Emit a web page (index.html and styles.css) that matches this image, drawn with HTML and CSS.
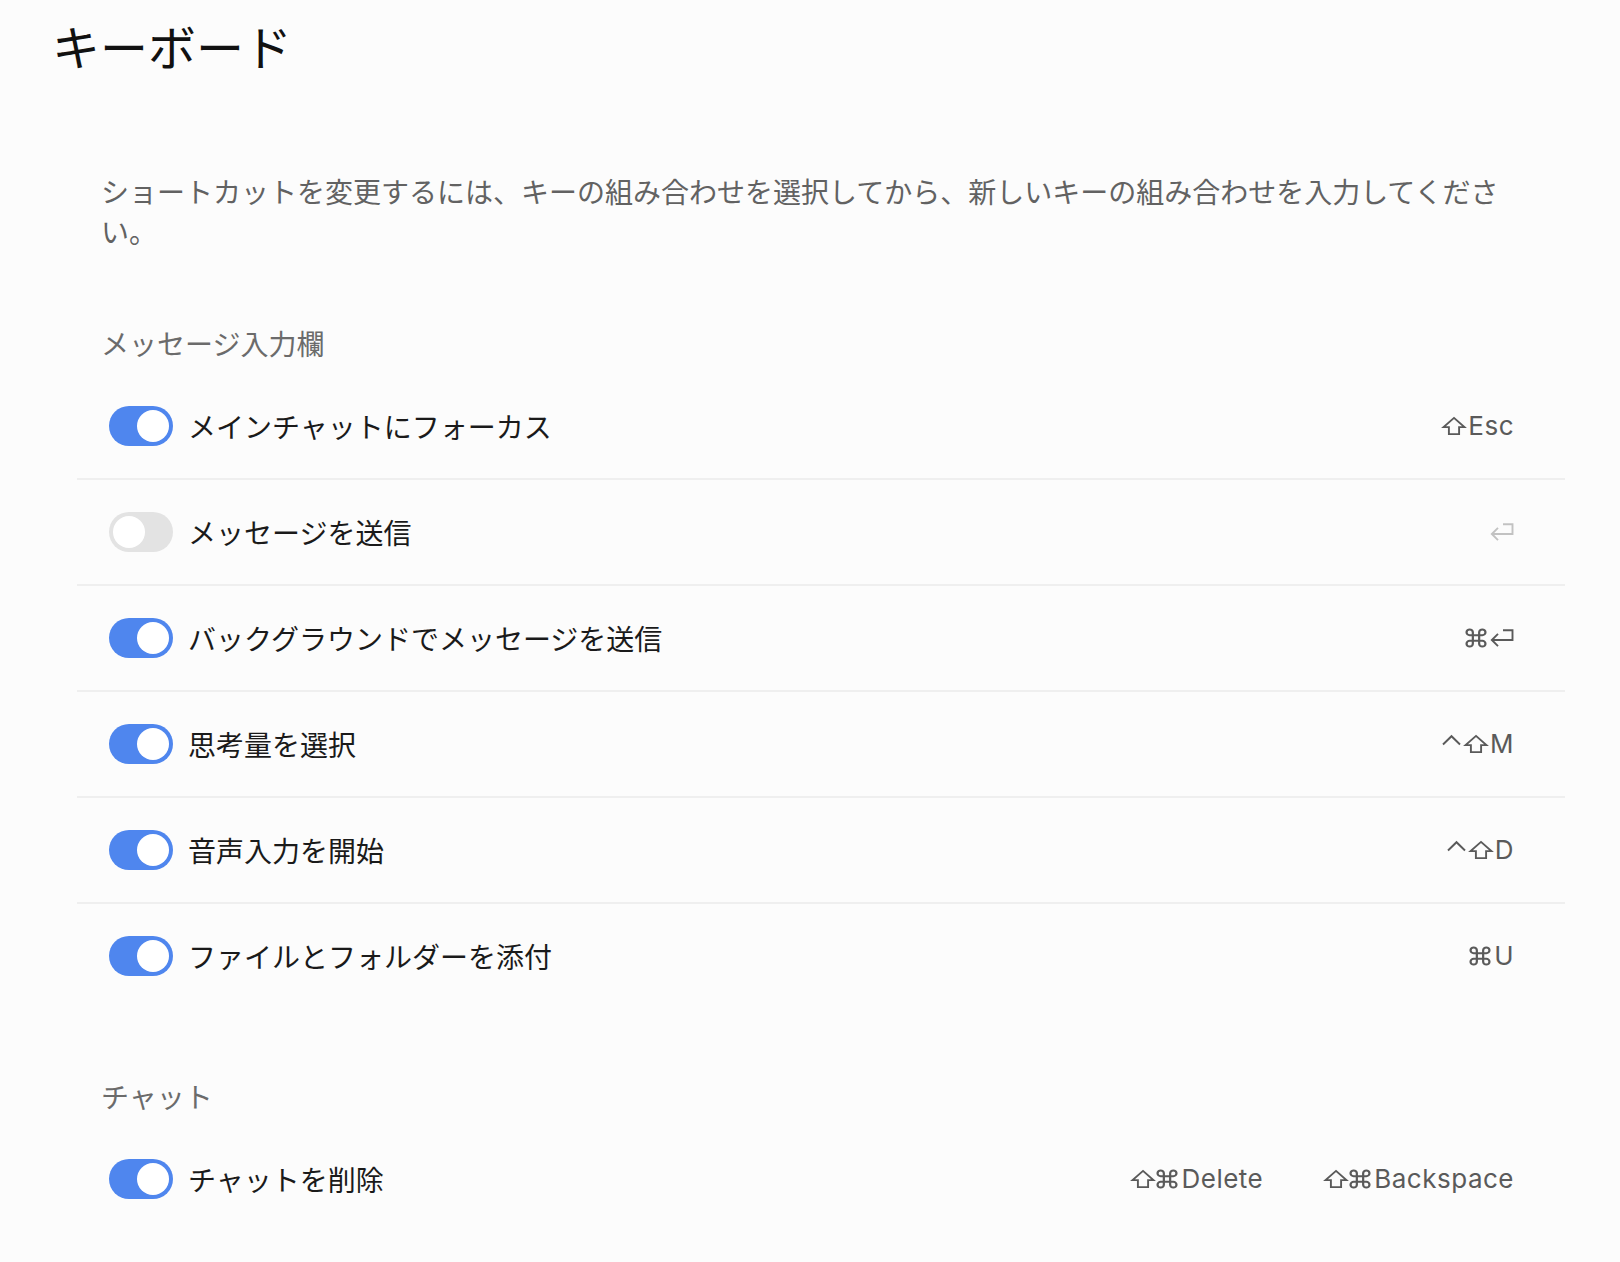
FILE: index.html
```html
<!DOCTYPE html>
<html lang="ja">
<head>
<meta charset="utf-8">
<title>キーボード</title>
<link rel="stylesheet" href="styles.css">
</head>
<body>
<main class="page">
  <h1 class="title">キーボード</h1>
  <div class="settings">
    <p class="desc">ショートカットを変更するには、キーの組み合わせを選択してから、新しいキーの組み合わせを入力してください。</p>

    <section class="section">
      <h2 class="section-title">メッセージ入力欄</h2>
      <div class="list">
        <div class="row">
          <span class="toggle on"><span class="knob"></span></span>
          <span class="label">メインチャットにフォーカス</span>
          <span class="keys">
            <span class="key"><svg class="ic ic-shift" viewBox="0 0 22 18"><path d="M11 0.9L21.4 10.1H16.1V17.1H5.9V10.1H0.6Z"/></svg>Esc</span>
          </span>
        </div>
        <div class="row">
          <span class="toggle off"><span class="knob"></span></span>
          <span class="label">メッセージを送信</span>
          <span class="keys">
            <span class="key muted"><svg class="ic ic-ret" viewBox="0 0 24 18"><path d="M13 1.2H22.5V11H1.8M8 4.8L1.8 11L8 17.2"/></svg></span>
          </span>
        </div>
        <div class="row">
          <span class="toggle on"><span class="knob"></span></span>
          <span class="label">バックグラウンドでメッセージを送信</span>
          <span class="keys">
            <span class="key"><svg class="ic ic-cmd" viewBox="2.5 2.5 19 19" preserveAspectRatio="none"><path d="M15 6v12a3 3 0 1 0 3-3H6a3 3 0 1 0 3 3V6a3 3 0 1 0-3 3h12a3 3 0 1 0-3-3"/></svg><svg class="ic ic-ret" viewBox="0 0 24 18"><path d="M13 1.2H22.5V11H1.8M8 4.8L1.8 11L8 17.2"/></svg></span>
          </span>
        </div>
        <div class="row">
          <span class="toggle on"><span class="knob"></span></span>
          <span class="label">思考量を選択</span>
          <span class="keys">
            <span class="key"><svg class="ic ic-ctrl" viewBox="0 0 19 18"><path d="M1 9.5L9.5 1.2L18 9.5"/></svg><svg class="ic ic-shift" viewBox="0 0 22 18"><path d="M11 0.9L21.4 10.1H16.1V17.1H5.9V10.1H0.6Z"/></svg>M</span>
          </span>
        </div>
        <div class="row">
          <span class="toggle on"><span class="knob"></span></span>
          <span class="label">音声入力を開始</span>
          <span class="keys">
            <span class="key"><svg class="ic ic-ctrl" viewBox="0 0 19 18"><path d="M1 9.5L9.5 1.2L18 9.5"/></svg><svg class="ic ic-shift" viewBox="0 0 22 18"><path d="M11 0.9L21.4 10.1H16.1V17.1H5.9V10.1H0.6Z"/></svg>D</span>
          </span>
        </div>
        <div class="row">
          <span class="toggle on"><span class="knob"></span></span>
          <span class="label">ファイルとフォルダーを添付</span>
          <span class="keys">
            <span class="key"><svg class="ic ic-cmd" viewBox="2.5 2.5 19 19" preserveAspectRatio="none"><path d="M15 6v12a3 3 0 1 0 3-3H6a3 3 0 1 0 3 3V6a3 3 0 1 0-3 3h12a3 3 0 1 0-3-3"/></svg>U</span>
          </span>
        </div>
      </div>
    </section>

    <section class="section">
      <h2 class="section-title">チャット</h2>
      <div class="list">
        <div class="row">
          <span class="toggle on"><span class="knob"></span></span>
          <span class="label">チャットを削除</span>
          <span class="keys">
            <span class="key"><svg class="ic ic-shift" viewBox="0 0 22 18"><path d="M11 0.9L21.4 10.1H16.1V17.1H5.9V10.1H0.6Z"/></svg><svg class="ic ic-cmd" viewBox="2.5 2.5 19 19" preserveAspectRatio="none"><path d="M15 6v12a3 3 0 1 0 3-3H6a3 3 0 1 0 3 3V6a3 3 0 1 0-3 3h12a3 3 0 1 0-3-3"/></svg>Delete</span>
            <span class="key"><svg class="ic ic-shift" viewBox="0 0 22 18"><path d="M11 0.9L21.4 10.1H16.1V17.1H5.9V10.1H0.6Z"/></svg><svg class="ic ic-cmd" viewBox="2.5 2.5 19 19" preserveAspectRatio="none"><path d="M15 6v12a3 3 0 1 0 3-3H6a3 3 0 1 0 3 3V6a3 3 0 1 0-3 3h12a3 3 0 1 0-3-3"/></svg>Backspace</span>
          </span>
        </div>
      </div>
    </section>
  </div>
</main>
</body>
</html>
```
FILE: styles.css
```css
html, body {
  margin: 0;
  padding: 0;
  background: #fcfcfc;
}

body {
  font-family: "Noto Sans CJK JP", "Noto Sans", sans-serif;
  color: #1c1c1c;
}

.page {
  padding: 13px 55px 40px 52px;
}

.title {
  margin: 0;
  font-size: 48px;
  line-height: 64px;
  font-weight: 400;
  color: #111111;
}

.settings {
  margin-left: 25px;
}

.desc {
  margin: 94px 0 72px;
  padding: 0 24px;
  font-size: 28px;
  line-height: 40px;
  color: #626262;
}

.section + .section {
  margin-top: 68px;
}

.section-title {
  margin: 0 0 11px;
  padding: 0 24px;
  font-size: 28px;
  line-height: 40px;
  font-weight: 400;
  color: #6b6b6b;
}

.row {
  display: flex;
  align-items: center;
  height: 104px;
  padding: 0 51px 0 32px;
  border-bottom: 2px solid #efefef;
}

.row:last-child {
  border-bottom: none;
}

.toggle {
  flex: none;
  box-sizing: border-box;
  width: 64px;
  height: 40px;
  padding: 4px;
  border-radius: 20px;
  display: flex;
  justify-content: flex-end;
  background: #4f86ee;
}

.toggle.off {
  justify-content: flex-start;
  background: #e3e3e3;
}

.knob {
  width: 32px;
  height: 32px;
  border-radius: 50%;
  background: #ffffff;
}

.label {
  flex: 1;
  margin-left: 15px;
  font-size: 28px;
  line-height: 40px;
  color: #1a1a1a;
}

.keys {
  display: flex;
  gap: 62px;
}

.key {
  font-family: Inter, "Liberation Sans", sans-serif;
  font-size: 26px;
  line-height: 40px;
  letter-spacing: 0.5px;
  color: #5a5a5a;
  white-space: nowrap;
}

.key.muted {
  color: #c2c2c2;
}

.ic {
  fill: none;
  stroke: currentColor;
  stroke-width: 1.9;
  vertical-align: baseline;
  overflow: visible;
}

.ic-shift {
  width: 22px;
  height: 18px;
  margin-right: 3px;
  stroke-linejoin: miter;
}

.ic-cmd {
  width: 20px;
  height: 18px;
  margin-right: 4px;
  stroke-width: 2.1;
}

.ic-ret {
  width: 24px;
  height: 18px;
}

.ic-ctrl {
  width: 19px;
  height: 18px;
  margin-right: 4px;
}
```
